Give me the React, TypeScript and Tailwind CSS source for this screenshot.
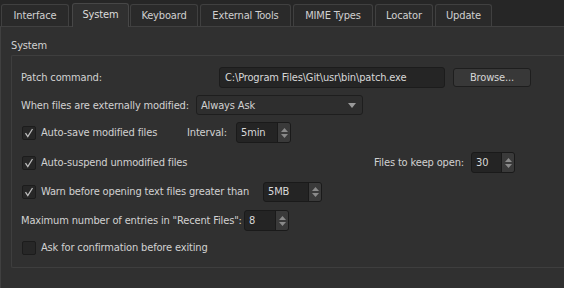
import React from 'react';

const tabs = [
  { label: 'Interface', w: 68 },
  { label: 'System', w: 57, active: true },
  { label: 'Keyboard', w: 68 },
  { label: 'External Tools', w: 91 },
  { label: 'MIME Types', w: 80 },
  { label: 'Locator', w: 58 },
  { label: 'Update', w: 57 },
];

function Check({ on }: { on?: boolean }) {
  return (
    <span className="flex h-[14px] w-[14px] items-center justify-center rounded-[2px] border border-[#1c1c1c] bg-[#272727]">
      {on && (
        <svg width="10" height="10" viewBox="0 0 10 10" fill="none">
          <path d="M1.5 5.2 L3.8 8.5 L8.5 1" stroke="#bdbdbd" strokeWidth="1.3" />
        </svg>
      )}
    </span>
  );
}

function Spin({ value, w, h = 21 }: { value: string; w: number; h?: number }) {
  return (
    <div
      className="flex overflow-hidden rounded-[3px] border border-[#1a1a1a] bg-[#242424]"
      style={{ width: w, height: h }}
    >
      <span className="flex flex-1 items-center pl-[4px] text-[#d8d8d8]">{value}</span>
      <span className="flex w-[13px] flex-col items-center justify-center gap-[2px] border-l border-[#1a1a1a] bg-[#3a3a3a]">
        <svg width="7" height="4" viewBox="0 0 7 4"><path d="M0 4 L3.5 0 L7 4Z" fill="#8a8a8a" /></svg>
        <svg width="7" height="4" viewBox="0 0 7 4"><path d="M0 0 L3.5 4 L7 0Z" fill="#8a8a8a" /></svg>
      </span>
    </div>
  );
}

export default function App() {
  return (
    <div
      className="h-[288px] w-[564px] overflow-hidden whitespace-nowrap bg-[#262626] text-[11px] leading-none tracking-[-0.15px] text-[#d2d2d2]"
      style={{ fontFamily: '"DejaVu Sans Condensed", "Liberation Sans", sans-serif' }}
    >
      {/* tab bar */}
      <div className="relative z-10 flex h-[27px] items-end pl-[1px]">
        {tabs.map((t) =>
          t.active ? (
            <div
              key={t.label}
              className="mx-[1px] flex h-[24px] items-center justify-center rounded-t-[3px] border border-b-0 border-[#474747] bg-[#303030] pb-[2px] text-[#dcdcdc]"
              style={{ width: t.w }}
            >
              {t.label}
            </div>
          ) : (
            <div
              key={t.label}
              className="mr-[2px] mb-[1px] flex h-[22px] items-center justify-center rounded-t-[3px] border border-b-0 border-[#404040] bg-[#2a2a2a] text-[#d0d0d0]"
              style={{ width: t.w }}
            >
              {t.label}
            </div>
          )
        )}
      </div>

      {/* pane */}
      <div className="-mt-[1px] h-[262px] border-l border-t border-[#404040] bg-[#303030] pl-[10px] pt-[12px]">
        <div className="h-[14px] leading-[14px]">System</div>
        <div className="mt-[2px] h-[213px] rounded-l-[2px] border-y border-l border-[#3e3e3e] pl-[9px] pt-[10px]">
          {/* patch command */}
          <div className="flex h-[23px] items-center">
            <span className="w-[198px]">Patch command:</span>
            <div className="flex h-[21px] w-[226px] items-center rounded-[3px] border border-[#1c1c1c] bg-[#252525] pl-[5px] text-[#d8d8d8]">
              C:\Program Files\Git\usr\bin\patch.exe
            </div>
            <button className="ml-[8px] h-[19px] w-[78px] rounded-[3px] border border-[#1e1e1e] bg-[#383838] pb-[1px] text-[#d6d6d6]">
              Browse...
            </button>
          </div>

          {/* externally modified */}
          <div className="mt-[5px] flex h-[22px] items-center">
            <span className="w-[175px]">When files are externally modified:</span>
            <div className="flex h-[20px] w-[167px] items-center justify-between rounded-[3px] border border-[#1e1e1e] bg-[#2e2e2e] pl-[4px] pr-[6px]">
              <span>Always Ask</span>
              <svg width="8" height="5" viewBox="0 0 8 5"><path d="M0 0 L4 5 L8 0Z" fill="#9a9a9a" /></svg>
            </div>
          </div>

          {/* auto save */}
          <div className="mt-[5px] flex h-[23px] items-center">
            <span className="ml-[1px] w-[19px]"><Check on /></span>
            <span className="w-[146px]">Auto-save modified files</span>
            <span className="w-[49px]">Interval:</span>
            <Spin value="5min" w={55} />
          </div>

          {/* auto suspend */}
          <div className="mt-[7px] flex h-[23px] items-center">
            <span className="ml-[1px] w-[19px]"><Check on /></span>
            <span className="w-[333px]">Auto-suspend unmodified files</span>
            <span className="w-[97px]">Files to keep open:</span>
            <Spin value="30" w={44} />
          </div>

          {/* warn */}
          <div className="mt-[6px] flex h-[23px] items-center">
            <span className="ml-[1px] w-[19px]"><Check on /></span>
            <span className="w-[222px]">Warn before opening text files greater than</span>
            <Spin value="5MB" w={59} h={20} />
          </div>

          {/* max recent */}
          <div className="mt-[6px] flex h-[23px] items-center">
            <span className="w-[223px]">Maximum number of entries in "Recent Files":</span>
            <Spin value="8" w={45} />
          </div>

          {/* confirm */}
          <div className="mt-[4px] flex h-[23px] items-center">
            <span className="ml-[1px] w-[19px]"><Check /></span>
            <span>Ask for confirmation before exiting</span>
          </div>
        </div>
      </div>
    </div>
  );
}
